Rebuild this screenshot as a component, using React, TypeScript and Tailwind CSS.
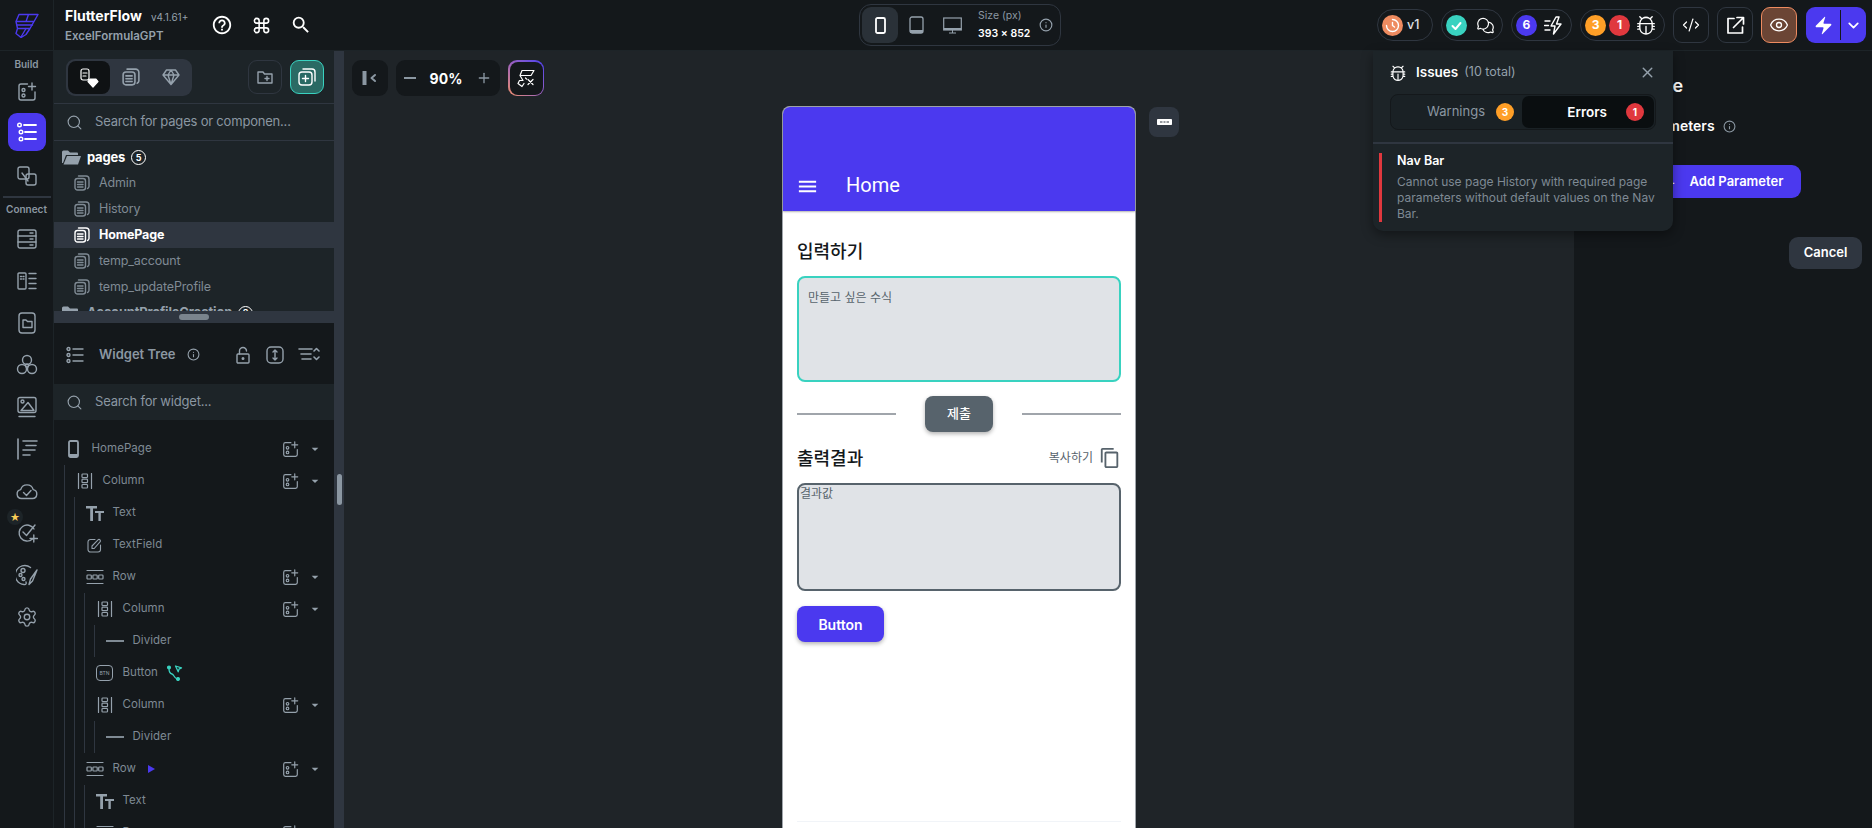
import type { ReactNode } from 'react'
import { Settings, Command, Zap, ChevronDown, X, Eye, CodeXml, Search, Info, Plus } from 'lucide-react'
import { MdOutlineHelpOutline, MdSearch, MdMenu, MdContentCopy, MdArrowDropDown } from 'react-icons/md'
import { PiBugBeetle, PiChatsCircle } from 'react-icons/pi'

const UI_FONT = "font-['Inter','Noto_Sans_CJK_KR',sans-serif]"

function Svg({ size = 20, box = 20, className = '', children }: { size?: number; box?: number; className?: string; children: ReactNode }) {
  return (
    <svg width={size} height={size} viewBox={`0 0 ${box} ${box}`} fill="none" stroke="currentColor" strokeWidth={1.4} strokeLinecap="round" strokeLinejoin="round" className={className}>
      {children}
    </svg>
  )
}

function Logo() {
  return (
    <Svg size={25} box={25} className="text-[#4b39ef]">
      <path d="M5 1.500h19l-4 7H2zM14.500 1.500l-2.500 7M2 8.500h18l-4 7H3.500zM3.500 15.500H16l-4 6-5 3-5-4z" />
      <path d="M3 12h15.500M7 24l5-8.500" />
    </Svg>
  )
}

function AddWidget({ size = 20 }: { size?: number }) {
  return (
    <Svg size={size}>
      <path d="M10.500 2H4a2 2 0 0 0-2 2v12a2 2 0 0 0 2 2h12a2 2 0 0 0 2-2v-6" />
      <circle cx="6.500" cy="8" r="1.500" />
      <circle cx="6.500" cy="13.500" r="1.500" />
      <path d="M15 1v7M11.500 4.500h7" />
    </Svg>
  )
}

function PagesIcon({ size = 16 }: { size?: number }) {
  return (
    <Svg size={size} box={16} className="shrink-0">
      <rect x="1" y="3.500" width="10.500" height="11.500" rx="2.500" />
      <path d="M4.500 1h7.500a3 3 0 0 1 3 3v7.500a2.500 2.500 0 0 1-1.500 2" />
      <path d="M3.500 7h5.500M3.500 9.500h5.500M3.500 12h5.500" />
    </Svg>
  )
}

function FolderIcon() {
  return (
    <svg width={19} height={15} viewBox="0 0 19 15" fill="currentColor" className="shrink-0">
      <path d="M0 2a1.500 1.500 0 0 1 1.500-1.500H6L8 2.500h7a1 1 0 0 1 1 1V5H4L1 13H0z" />
      <path d="M5 6h14l-3 8.500H1.500z" />
    </svg>
  )
}

function ColumnIcon() {
  return (
    <Svg size={16} box={16} className="stroke-[1.200]">
      <path d="M1.500 .5v15M14.500 .5v15" />
      <rect x="5" y="1" width="5.500" height="3.500" rx=".8" />
      <rect x="5" y="6.200" width="5.500" height="3.500" rx=".8" />
      <rect x="5" y="11.500" width="5.500" height="3.500" rx=".8" />
    </Svg>
  )
}

function RowIcon() {
  return (
    <Svg size={18} box={18} className="stroke-[1.200]">
      <path d="M1 2.500h16M1 15.500h16" />
      <rect x="1" y="7" width="4.300" height="4" rx=".8" />
      <rect x="6.900" y="7" width="4.300" height="4" rx=".8" />
      <rect x="12.700" y="7" width="4.300" height="4" rx=".8" />
    </Svg>
  )
}

function TextIcon() {
  return (
    <svg width={18} height={15} viewBox="0 0 18 15" fill="currentColor">
      <path d="M0 0h11v2.500H7V15H4.200V2.500H0zM9 5h9v2h-3.200v8h-2.400V7H9z" />
    </svg>
  )
}

function TextFieldIcon() {
  return (
    <Svg size={15} box={15} className="stroke-[1.100]">
      <path d="M8 1.500H3.500a2.500 2.500 0 0 0-2.500 2.500v7.500a2.500 2.500 0 0 0 2.500 2.500h7.500a2.500 2.500 0 0 0 2.500-2.500V7" />
      <path d="M5 10.500V8l6-6.200a1.300 1.300 0 0 1 2 2L7.200 10.500z" />
    </Svg>
  )
}

function PhoneTree() {
  return (
    <svg width={11} height={18} viewBox="0 0 11 18" fill="none">
      <rect x="1" y="1" width="9" height="16" rx="1.500" stroke="currentColor" strokeWidth="1.800" />
      <rect x="1" y="14" width="9" height="3" fill="currentColor" />
    </svg>
  )
}

function ButtonIcon() {
  return (
    <div className="flex h-[16px] w-[17px] items-center justify-center rounded-[4px] border border-[#95a1ac] text-[5px] leading-none">BTN</div>
  )
}

function ActionIcon() {
  return (
    <svg width={16} height={16} viewBox="0 0 16 16" fill="none" stroke="#39d2c0" strokeWidth="1.300" strokeLinejoin="round" className="ml-[9px]">
      <circle cx="2" cy="2.500" r="1.400" fill="#39d2c0" />
      <circle cx="11" cy="14" r="1.400" fill="#39d2c0" />
      <path d="M2 3.500c0 4 1 5 3 5.500s2 4 5 5" />
      <path d="M8.500 1l6 1.800-2.500 1.300-.8 2.700z" />
    </svg>
  )
}

function TreeRow({ icon, label, add, extra }: { icon: ReactNode; label: string; add?: boolean; extra?: ReactNode }) {
  return (
    <div className="flex h-8 items-center pl-2 pr-[11px]">
      <div className="flex w-[23px] shrink-0 justify-center">{icon}</div>
      <span className="ml-[6.500px] text-[11.500px] tracking-[0.05px] text-[#7f8a94]">{label}</span>
      {extra}
      {add && (
        <div className="ml-auto flex items-center gap-[8px]">
          <AddWidget size={17} />
          <MdArrowDropDown size={16} />
        </div>
      )}
    </div>
  )
}

function Branch({ first, children }: { first?: boolean; children: ReactNode }) {
  return <div className={`${first ? 'ml-[10px]' : 'ml-[9px]'} border-l border-[#2f3640]`}>{children}</div>
}

function Divider() {
  return <TreeRow label="Divider" icon={<div className="h-[1.500px] w-[18px] bg-[#7f8a94]" />} />
}

function WidgetTree() {
  return (
    <div className="pt-[13px] text-[#95a1ac]">
      <TreeRow label="HomePage" icon={<PhoneTree />} add />
      <Branch first>
        <TreeRow label="Column" icon={<ColumnIcon />} add />
        <Branch>
          <TreeRow label="Text" icon={<TextIcon />} />
          <TreeRow label="TextField" icon={<TextFieldIcon />} />
          <TreeRow label="Row" icon={<RowIcon />} add />
          <Branch>
            <TreeRow label="Column" icon={<ColumnIcon />} add />
            <Branch>
              <Divider />
            </Branch>
            <TreeRow label="Button" icon={<ButtonIcon />} extra={<ActionIcon />} />
            <TreeRow label="Column" icon={<ColumnIcon />} add />
            <Branch>
              <Divider />
            </Branch>
          </Branch>
          <TreeRow
            label="Row"
            icon={<RowIcon />}
            add
            extra={<div className="ml-3 h-0 w-0 border-y-[4px] border-l-[7px] border-y-transparent border-l-[#4b39ef]" />}
          />
          <Branch>
            <TreeRow label="Text" icon={<TextIcon />} />
            <TreeRow label="Row" icon={<RowIcon />} add />
          </Branch>
        </Branch>
      </Branch>
    </div>
  )
}

function RailItem({ children }: { children: ReactNode }) {
  return <div className="relative flex h-[42px] w-full items-center justify-center">{children}</div>
}

function Rail() {
  return (
    <div className="flex w-[54px] shrink-0 flex-col items-center border-r border-[#1d2428] bg-[#14181b] text-[#95a1ac]">
      <div className="flex h-[20px] items-end text-[10px] font-semibold leading-[14px] text-[#8b97a2]">Build</div>
      <div className="flex h-[41px] items-center justify-center">
        <AddWidget />
      </div>
      <div className="mt-[1px] flex h-[38px] w-[38px] items-center justify-center rounded-[9px] bg-[#4b39ef] text-white">
        <Svg size={22} box={22}>
          <circle cx="3.500" cy="4" r="1.800" />
          <circle cx="5" cy="11" r="1.800" />
          <circle cx="5" cy="18" r="1.800" />
          <path d="M8 4h12M9 11h11M9 18h11" strokeWidth="1.800" />
        </Svg>
      </div>
      <div className="mt-[5px] flex h-[40px] items-center justify-center">
        <Svg>
          <rect x="1" y="1" width="11" height="12" rx="2" />
          <rect x="9" y="8" width="10" height="11" rx="2" />
          <path d="M5 7l6 8" />
        </Svg>
      </div>
      <div className="h-[2px] w-[48px] bg-[#2f3640]" />
      <div className="flex h-[20px] items-center pt-[2px] text-[10px] font-semibold text-[#8b97a2]">Connect</div>
      <RailItem>
        <Svg>
          <rect x="1" y="1" width="18" height="18" rx="2" />
          <path d="M1 7h18M1 13h18M13 4h3M13 10h3M13 16h3" />
        </Svg>
      </RailItem>
      <RailItem>
        <Svg>
          <rect x="1" y="2" width="8" height="16" rx="1" />
          <path d="M12 2.500h7M12 7.500h7M12 12.500h7M12 17.500h7M3.500 5.500h1M6 5.500h1M3.500 8h1M6 8h1" />
        </Svg>
      </RailItem>
      <RailItem>
        <Svg size={22} box={22}>
          <rect x="3" y="1" width="16" height="20" rx="3" />
          <path d="M7 8h3l1.500 1.500H16v6H7z" />
        </Svg>
      </RailItem>
      <RailItem>
        <Svg size={22} box={22}>
          <circle cx="11" cy="6" r="4.500" />
          <circle cx="6" cy="15" r="4.500" />
          <circle cx="16" cy="15" r="4.500" />
          <circle cx="11" cy="11.500" r="1.500" />
        </Svg>
      </RailItem>
      <RailItem>
        <Svg size={22} box={22}>
          <rect x="2" y="1.500" width="18" height="15" rx="2" />
          <circle cx="6.500" cy="5.500" r="1.500" />
          <path d="M5 14.500l7-8 6 8zM3 20.500h16" />
        </Svg>
      </RailItem>
      <RailItem>
        <Svg size={22} box={22}>
          <path d="M2 1v20M7 3h14M10 7.500h10M7 12h12M7 17h7" strokeWidth="1.600" />
        </Svg>
      </RailItem>
      <RailItem>
        <Svg size={24} box={24}>
          <path d="M6.500 19.500a4.500 4.500 0 0 1-.8-8.900 6.500 6.500 0 0 1 12.500 0 4.500 4.500 0 0 1-.7 8.900z" />
          <path d="M8.500 13.500l3 3 4.500-5" />
        </Svg>
      </RailItem>
      <RailItem>
        <Svg size={22} box={22}>
          <path d="M18 7a8 8 0 1 0-1.500 10" />
          <path d="M7 10l3.500 3.500L19 3M14 16.500h7.500M17.800 13v7" />
        </Svg>
        <div className="absolute left-[7px] top-[-3px] flex h-4 w-4 items-center justify-center rounded-full bg-[#1d2428] text-[10px] leading-none text-[#f9cf58]">★</div>
      </RailItem>
      <RailItem>
        <Svg size={22} box={22}>
          <path d="M14.500 3.500A9.500 9.500 0 1 0 8 20.500c2 .5 2.500-1 2-2.500" />
          <circle cx="7" cy="6.500" r="2" />
          <circle cx="4.500" cy="11" r="1.500" />
          <circle cx="7.500" cy="15" r="1.500" />
          <path d="M21 6l-6.500 9-1.500 5.500 3.500-3.500L21 6z" />
        </Svg>
      </RailItem>
      <RailItem>
        <Settings size={22} strokeWidth={1.500} />
      </RailItem>
    </div>
  )
}

function PageRow({ name, active }: { name: string; active?: boolean }) {
  return (
    <div className={`flex h-[26px] items-center gap-[9px] pl-5 text-[12.500px] tracking-[-0.15px] ${active ? 'bg-[#2f3640] font-bold text-white' : 'text-[#7f8a94]'}`}>
      <PagesIcon />
      {name}
    </div>
  )
}

function PagesPanel() {
  return (
    <div className="h-[260px] shrink-0 overflow-hidden bg-[#1d2428] text-[#95a1ac]">
      <div className="flex h-[53px] items-center justify-between border-b border-[#2f3640] pl-3 pr-[10px]">
        <div className="flex h-[37px] w-[126px] items-center rounded-[9px] bg-[#2f3640] p-[2px]">
          <div className="flex h-full w-[42px] items-center justify-center rounded-[8px] bg-[#0f1214] text-white">
            <Svg size={24} box={24} className="stroke-[1.200]">
              <rect x="4" y="4" width="8" height="11" rx="2" />
              <path d="M6 8h4M6 11h3" />
              <path d="M13 14h6l2 2.500-5 5.500-5-5.500z" fill="currentColor" />
            </Svg>
          </div>
          <div className="flex w-[41px] justify-center">
            <PagesIcon size={18} />
          </div>
          <div className="flex w-[39px] justify-center">
            <Svg size={18} box={18}>
              <path d="M4.500 2h9L17 7l-8 9.500L1 7zM1 7h16M6 7l3 9.500L12 7M6 7l3-5 3 5" />
            </Svg>
          </div>
        </div>
        <div className="flex gap-2">
          <div className="flex h-[34px] w-[34px] items-center justify-center rounded-[9px] border border-[#2f3640]">
            <Svg size={16} box={16}>
              <path d="M1 3h5l1.500 2H15v9H1zM8 9.500h4M10 7.500v4" />
            </Svg>
          </div>
          <div className="flex h-[34px] w-[34px] items-center justify-center rounded-[9px] border border-[#39d2c0] bg-[#2a6a64] text-white">
            <Svg size={18} box={18}>
              <rect x="1" y="4" width="13" height="13" rx="3" />
              <path d="M5 1h9a3 3 0 0 1 3 3v9M4.500 10.500h6M7.500 7.500v6" />
            </Svg>
          </div>
        </div>
      </div>
      <div className="flex h-[37px] items-center gap-3 border-b border-[#2f3640] pl-3">
        <Search size={17} strokeWidth={1.600} />
        <span className="text-[13px] tracking-[-0.2px] text-[#8b97a2]">Search for pages or componen...</span>
      </div>
      <div className="flex h-[29px] items-center pl-2 pt-[4px]">
        <FolderIcon />
        <span className="ml-[6px] text-[13px] font-bold tracking-[-0.2px] text-white">pages</span>
        <span className="ml-[6px] flex h-[15px] w-[15px] items-center justify-center rounded-full border border-white text-[9px] font-bold text-white">5</span>
      </div>
      <PageRow name="Admin" />
      <PageRow name="History" />
      <PageRow name="HomePage" active />
      <PageRow name="temp_account" />
      <PageRow name="temp_updateProfile" />
      <div className="flex h-[26px] items-center pl-2">
        <FolderIcon />
        <span className="ml-[6px] text-[13px] font-bold tracking-[-0.2px] text-[#95a1ac]">AccountProfileCreation</span>
        <span className="ml-[6px] flex h-[15px] w-[15px] items-center justify-center rounded-full border border-white text-[9px] font-bold text-white">2</span>
      </div>
    </div>
  )
}

function WidgetPanel() {
  return (
    <div className="min-h-0 flex-1 overflow-hidden bg-[#14181b] text-[#95a1ac]">
      <div className="flex h-[61px] items-center pl-3 pr-[14px] pt-[2px]">
        <Svg size={18} box={18}>
          <circle cx="2.500" cy="3" r="1.500" />
          <circle cx="2.500" cy="9" r="1.500" />
          <circle cx="2.500" cy="15" r="1.500" />
          <path d="M7 3h10M7 9h10M7 15h10" />
        </Svg>
        <span className="ml-[15px] text-[13px] font-semibold text-[#8b97a2]">Widget Tree</span>
        <Info size={13} className="ml-[11px]" />
        <div className="ml-auto flex items-center gap-[14px]">
          <Svg size={18} box={18}>
            <rect x="3" y="8" width="12" height="9" rx="1" />
            <path d="M5.500 8V5a3.500 3.500 0 0 1 7 0" />
            <circle cx="9" cy="12.500" r=".8" />
          </Svg>
          <Svg size={18} box={18}>
            <rect x="1" y="1" width="16" height="16" rx="4" />
            <path d="M9 4v10M7 6l2-2 2 2M7 12l2 2 2-2" />
          </Svg>
          <Svg size={22} box={22}>
            <path d="M1 5h13M3 10h10M4 15h9M16 7l2.500-2.500L21 7M16 13l2.500 2.500L21 13" strokeWidth="1.600" />
          </Svg>
        </div>
      </div>
      <div className="flex h-9 items-center gap-3 bg-[#1d2428] pl-3">
        <Search size={17} strokeWidth={1.600} />
        <span className="text-[13px] tracking-[-0.2px] text-[#8b97a2]">Search for widget...</span>
      </div>
      <WidgetTree />
    </div>
  )
}

function Sidebar() {
  return (
    <div className="flex w-[280px] shrink-0 flex-col">
      <PagesPanel />
      <div className="flex h-3 shrink-0 items-center justify-center bg-[#2f3640]">
        <div className="h-[6px] w-[30px] rounded-full bg-[#7a848d]" />
      </div>
      <WidgetPanel />
    </div>
  )
}

function Pill({ children, className = '' }: { children: ReactNode; className?: string }) {
  return <div className={`flex h-[32px] items-center rounded-full border border-[#2f3640] pl-[4px] ${className}`}>{children}</div>
}

function Dot({ color, children }: { color: string; children: ReactNode }) {
  return <div className={`flex h-[21px] w-[21px] shrink-0 items-center justify-center rounded-full text-[12px] font-bold text-white ${color}`}>{children}</div>
}

function TopBar() {
  return (
    <div className="relative z-10 flex h-[51px] shrink-0 items-center border-b border-[#1d2428] bg-[#14181b] text-white">
      <div className="flex h-full w-[54px] shrink-0 items-center justify-center border-r border-[#1d2428]">
        <Logo />
      </div>
      <div className="ml-[11px] w-[122px]">
        <div className="flex items-baseline gap-[9px]">
          <span className="text-[14px] font-bold leading-[20px]">FlutterFlow</span>
          <span className="text-[10px] text-[#95a1ac]">v4.1.61+</span>
        </div>
        <div className="pt-[1px] text-[11.500px] font-semibold leading-[18px] text-[#95a1ac]">ExcelFormulaGPT</div>
      </div>
      <div className="ml-[24px] flex items-center gap-[19px]">
        <MdOutlineHelpOutline size={22} />
        <Command size={19} />
        <MdSearch size={22} />
      </div>

      <div className="absolute left-[859px] flex h-[42px] w-[202px] items-center rounded-[12px] border border-[#2f3640] px-[2px] text-[#95a1ac]">
        <div className="flex h-[36px] w-[36px] items-center justify-center rounded-[9px] bg-[#2a3138] text-white">
          <svg width={11} height={17} viewBox="0 0 11 17" fill="none"><rect x="1" y="1" width="9" height="15" rx="1.500" stroke="currentColor" strokeWidth="1.800" /></svg>
        </div>
        <div className="flex w-[36px] justify-center">
          <svg width={15} height={18} viewBox="0 0 15 18" fill="none"><rect x="1" y="1" width="13" height="16" rx="2" stroke="currentColor" strokeWidth="1.300" /><rect x="1" y="14" width="13" height="3" fill="currentColor" /></svg>
        </div>
        <div className="flex w-[36px] justify-center">
          <svg width={19} height={17} viewBox="0 0 19 17" fill="none"><rect x=".7" y="1" width="17.600" height="12" stroke="currentColor" strokeWidth="1.200" /><rect x=".7" y="11" width="17.600" height="2" fill="currentColor" /><path d="M6 16h7M9.500 13v3" stroke="currentColor" /></svg>
        </div>
        <div className="ml-[8px] leading-none">
          <div className="text-[10.500px] text-[#8b97a2]">Size (px)</div>
          <div className="mt-[7px] text-[10.500px] font-semibold text-white">393 × 852</div>
        </div>
        <Info size={14} className="ml-[9px]" />
      </div>

      <div className="ml-auto flex items-center gap-2 pr-[6px]">
        <Pill className="w-[56px] gap-[4px]">
          <Dot color="bg-[#ee8b60]">
            <Svg size={15} box={15}><path d="M7.500 1.500a6 6 0 1 1-6 6M7.500 4.500v3l2 1.500" /></Svg>
          </Dot>
          <span className="text-[12.500px] font-medium text-[#e0e3e7]">v1</span>
        </Pill>
        <Pill className="w-[62px] gap-[9px]">
          <Dot color="bg-[#39d2c0]">
            <Svg size={13} box={13} className="stroke-2"><path d="M2.500 7l3 3 5-6" /></Svg>
          </Dot>
          <PiChatsCircle size={19} />
        </Pill>
        <Pill className="w-[61px] gap-[7px]">
          <Dot color="bg-[#4b39ef]">6</Dot>
          <Svg size={19} box={19}>
            <path d="M1 5h5M0.500 9.500h4M1 14h5M12 1L7 10h4l-1.500 8L17 8h-4.500L15 1z" />
          </Svg>
        </Pill>
        <Pill className="w-[85px] gap-[3px]">
          <Dot color="bg-[#ff9f27]">3</Dot>
          <Dot color="bg-[#e0383e]">1</Dot>
          <PiBugBeetle size={22} className="ml-[2px]" />
        </Pill>
        <div className="flex h-[36px] w-[36px] items-center justify-center rounded-[9px] border border-[#2f3640]">
          <CodeXml size={18} strokeWidth={1.600} />
        </div>
        <div className="flex h-[36px] w-[36px] items-center justify-center rounded-[9px] border border-[#2f3640]">
          <Svg size={19} box={19} className="stroke-[1.700]">
            <path d="M8 2.500H2v14.500h14.500v-6M7.500 11.500l9-9M11 1.500h6.500V8" />
          </Svg>
        </div>
        <div className="flex h-[36px] w-[36px] items-center justify-center rounded-[9px] border border-[#ee8b60] bg-[#6b4535]">
          <Eye size={20} strokeWidth={1.600} />
        </div>
        <div className="ml-[1px] flex h-[36px] w-[60px] items-center rounded-[9px] bg-[#4b39ef]">
          <div className="flex w-[34px] justify-center">
            <Zap size={21} fill="currentColor" strokeWidth={0} />
          </div>
          <div className="h-[30px] w-px bg-[#14181b]" />
          <div className="flex flex-1 justify-center">
            <ChevronDown size={17} strokeWidth={2.400} />
          </div>
        </div>
      </div>
    </div>
  )
}

function PhonePreview() {
  return (
    <div className="relative mx-auto flex w-[354px] flex-1 flex-col rounded-t-[8px] border-x border-t border-[#a0a5ab] bg-white text-[#14181b]">
      <div className="flex h-[104px] shrink-0 items-end rounded-t-[7px] bg-[#4b39ef] pb-[13px] shadow-[0_1px_2px_rgba(0,0,0,0.3)]">
        <MdMenu size={23} className="ml-[13px] text-white" />
        <span className="ml-[27px] font-['Roboto',sans-serif] text-[20px] leading-[26px] text-white">Home</span>
      </div>
      <div className="flex flex-1 flex-col px-[14px]">
        <div className="mt-[25px] h-[32px] text-[18px] font-medium leading-[32px]">입력하기</div>
        <div className="mt-[8px] h-[106px] rounded-[8px] border-2 border-[#39d2c0] bg-[#e0e3e7] pl-[9px] pt-[12px] text-[12px] leading-[16px] text-[#57636c]">만들고 싶은 수식</div>
        <div className="mt-[14px] flex h-[36px] items-center">
          <div className="h-[1.500px] w-[100px] bg-[#a0a5ab]" />
          <div className="ml-[29px] flex h-[36px] w-[68px] items-center justify-center rounded-[8px] bg-[#57636c] text-[13px] font-medium text-white shadow-[0_2px_4px_rgba(0,0,0,0.3)]">제출</div>
          <div className="ml-[29px] h-[1.500px] w-[100px] bg-[#a0a5ab]" />
        </div>
        <div className="mt-[11px] flex h-[30px] items-center">
          <span className="text-[18px] font-medium">출력결과</span>
          <span className="ml-auto text-[12px] text-[#57636c]">복사하기</span>
          <MdContentCopy size={22} className="ml-[6px] text-[#57636c]" />
        </div>
        <div className="mt-[10px] h-[108px] rounded-[8px] border-2 border-[#57636c] bg-[#e0e3e7] pl-[1px] pt-[1px] text-[12px] leading-[16px] text-[#57636c]">결과값</div>
        <div className="mt-[15px] flex h-[36px] w-[87px] items-center justify-center rounded-[8px] bg-[#4b39ef] text-[14px] font-semibold text-white shadow-[0_2px_4px_rgba(0,0,0,0.3)]">Button</div>
        <div className="mb-[6px] mt-auto h-px bg-[#f1f4f8]" />
      </div>
      <div className="absolute left-full top-0 ml-[14px] flex h-[30px] w-[30px] items-center justify-center rounded-[8px] bg-[#2f3640]">
        <svg width={15} height={6} viewBox="0 0 15 6">
          <rect width="15" height="6" rx=".8" fill="#fff" />
          <path d="M3 3h2.500M6.500 3h2M9.500 3h2.500" stroke="#2f3640" strokeWidth="1.200" />
        </svg>
      </div>
    </div>
  )
}

function Canvas() {
  return (
    <div className="flex min-w-0 flex-1 flex-col bg-[#1f2428]">
      <div className="flex h-[55px] shrink-0 items-start gap-2 pl-2 pt-[9px]">
        <div className="flex h-[36px] w-[36px] items-center justify-center rounded-[9px] bg-[#14181b] text-[#8b97a2]">
          <Svg size={18} box={18} className="stroke-2">
            <path d="M3.500 2v14" strokeWidth="4" strokeLinecap="butt" />
            <path d="M14 6l-3.500 3 3.500 3" />
          </Svg>
        </div>
        <div className="flex h-[36px] w-[104px] items-center justify-between rounded-[9px] bg-[#14181b] px-[8px] text-[#8b97a2]">
          <span className="h-[2px] w-[12px] bg-[#8b97a2]" />
          <span className="text-[14px] font-bold text-white">90%</span>
          <Plus size={16} strokeWidth={2} />
        </div>
        <div className="flex h-[36px] w-[36px] items-center justify-center rounded-[9px] bg-gradient-to-tr from-[#ee8b60] via-[#9b5fc0] to-[#4b39ef] p-[1.500px]">
          <div className="flex h-full w-full items-center justify-center rounded-[8px] bg-[#14181b] text-white">
            <Svg size={19} box={19} className="stroke-[1.200]">
              <path d="M5 1.500h12l-3 5H3zM3 6.500l3 5H2.500l-1.500 3 4 3 2-3" />
              <path d="M11 10.500l5 5M16 10.500l-5 5M8.500 9l1 1" />
            </Svg>
          </div>
        </div>
      </div>
      <PhonePreview />
    </div>
  )
}

function RightPanel() {
  return (
    <div className="flex w-[298px] shrink-0 flex-col bg-[#14181b] text-white">
      <div className="mt-[23px] pl-[3px] text-[18px] font-semibold leading-[24px]">Create Page</div>
      <div className="mt-[18px] flex items-center pl-[15px] text-[14px] font-semibold leading-[20px]">
        <span className="whitespace-nowrap">Define Parameters</span>
        <Info size={13} className="ml-[8px] text-[#8b97a2]" />
      </div>
      <div className="ml-[76px] mt-[29px] flex h-[33px] w-[151px] items-center rounded-[9px] bg-[#4b39ef] pl-[15px]">
        <span className="text-[16px] leading-none">+</span>
        <span className="ml-[14px] text-[13px] font-semibold">Add Parameter</span>
      </div>
      <div className="mr-[10px] mt-[39px] flex h-[32px] w-[73px] items-center justify-center self-end rounded-[9px] bg-[#2f3640] text-[13px] font-semibold">Cancel</div>
    </div>
  )
}

function IssuesPopup() {
  return (
    <div className="absolute left-[1373px] top-0 z-20 w-[300px] rounded-b-[10px] bg-[#1d2428] shadow-[0_4px_12px_rgba(0,0,0,0.4)]">
      <div className="flex h-[43px] items-center pl-[16px] pr-[17px] text-white">
        <PiBugBeetle size={18} />
        <span className="ml-[9px] text-[13.500px] font-semibold">Issues</span>
        <span className="ml-[6px] text-[12.500px] text-[#95a1ac]">(10 total)</span>
        <X size={17} className="ml-auto text-[#95a1ac]" />
      </div>
      <div className="mx-[17px] flex h-[36px] items-center rounded-[8px] border border-[#14181b] bg-[#1a2125] p-[1px]">
        <div className="flex h-full flex-1 items-center justify-end gap-[11px] pr-[8px] text-[13px] text-[#8b97a2]">
          Warnings
          <span className="flex h-[18px] w-[18px] items-center justify-center rounded-full bg-[#ff9f27] text-[10px] font-bold text-white">3</span>
        </div>
        <div className="flex h-full w-[132px] items-center justify-end gap-[19px] rounded-[7px] bg-[#0a0e10] pr-[10px] text-[13.500px] font-semibold text-white">
          Errors
          <span className="flex h-[18px] w-[18px] items-center justify-center rounded-full bg-[#e0383e] text-[10px] font-bold text-white">1</span>
        </div>
      </div>
      <div className="mt-[12px] h-[2px] bg-[#2f3640]" />
      <div className="flex pb-[9px] pl-[6px] pt-[9px]">
        <div className="h-[69px] w-[3px] shrink-0 bg-[#e0383e]" />
        <div className="ml-[15px] pr-[14px]">
          <div className="text-[12.500px] font-semibold leading-[16px] text-white">Nav Bar</div>
          <div className="mt-[5px] text-[12px] leading-[16px] text-[#7f8a94]">Cannot use page History with required page parameters without default values on the Nav Bar.</div>
        </div>
      </div>
    </div>
  )
}

export default function App() {
  return (
    <div className={`flex h-[828px] w-[1872px] flex-col overflow-hidden bg-[#14181b] ${UI_FONT}`}>
      <TopBar />
      <div className="relative flex min-h-0 flex-1">
        <Rail />
        <Sidebar />
        <div className="relative w-[10px] shrink-0 bg-[#2f3640]">
          <div className="absolute left-[3px] top-[423px] h-[31px] w-[5px] rounded-full bg-[#8b97a2]" />
        </div>
        <Canvas />
        <RightPanel />
        <IssuesPopup />
      </div>
    </div>
  )
}
